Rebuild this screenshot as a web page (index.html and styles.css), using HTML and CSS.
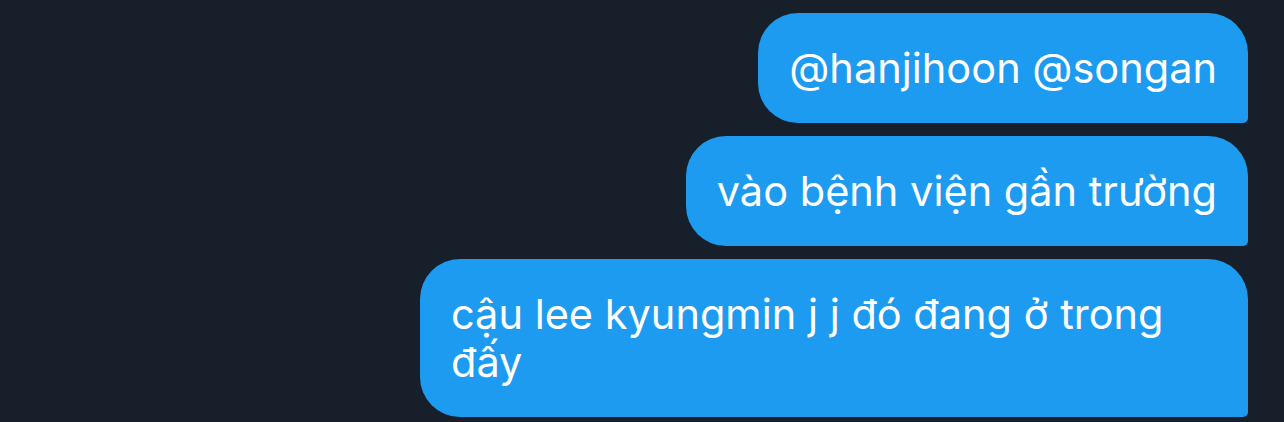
FILE: index.html
```html
<!DOCTYPE html>
<html lang="vi">
<head>
<meta charset="utf-8">
<link rel="stylesheet" href="styles.css">
</head>
<body>
<div class="thread">
  <div class="bubble">@hanjihoon @songan</div>
  <div class="bubble">vào bệnh viện gần trường</div>
  <div class="bubble">cậu lee kyungmin j j đó đang ở trong đấy</div>
</div>
</body>
</html>
```
FILE: styles.css
```css
html, body {
  margin: 0;
  padding: 0;
  background: #17202a;
  height: 100%;
  overflow: hidden;
}
.thread {
  display: flex;
  flex-direction: column;
  align-items: flex-end;
  gap: 13px;
  padding: 13px 36px 0 0;
}
.bubble {
  box-sizing: border-box;
  max-width: 828px;
  padding: 31px 31px;
  background: #1d9bf0;
  color: #ffffff;
  font-family: Inter, "Noto Sans", sans-serif;
  font-size: 41.5px;
  line-height: 48px;
  border-radius: 40px 40px 5px 40px;
}
```
